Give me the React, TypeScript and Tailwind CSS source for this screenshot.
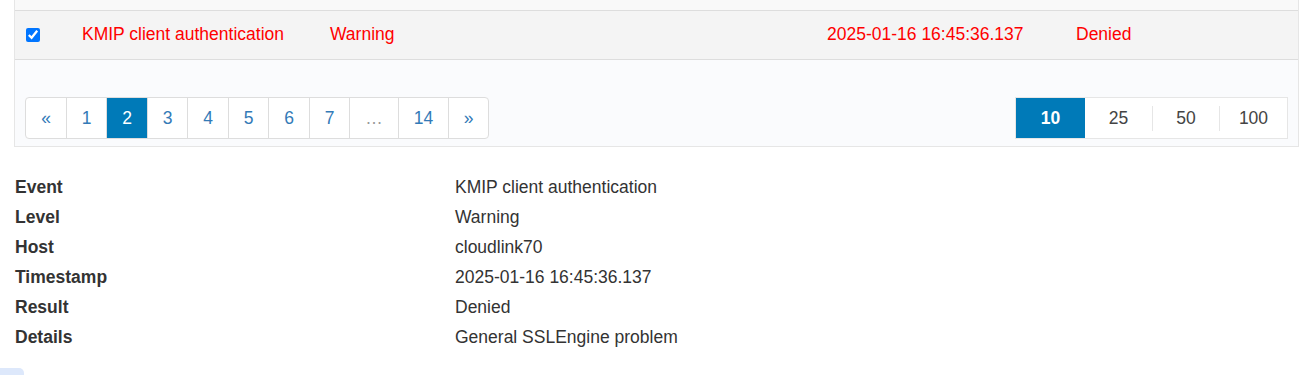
import React from 'react';

const PAGES = [
  { label: '«', w: 'w-[40px]' },
  { label: '1', w: 'w-[40px]' },
  { label: '2', w: 'w-[41px]', active: true },
  { label: '3', w: 'w-[40px]' },
  { label: '4', w: 'w-[41px]' },
  { label: '5', w: 'w-[40px]' },
  { label: '6', w: 'w-[41px]' },
  { label: '7', w: 'w-[40px]' },
  { label: '…', w: 'w-[49px]', muted: true },
  { label: '14', w: 'w-[50px]' },
  { label: '»', w: 'w-[40px]' },
];

const SIZES = ['10', '25', '50', '100'];

const DETAILS: [string, string][] = [
  ['Event', 'KMIP client authentication'],
  ['Level', 'Warning'],
  ['Host', 'cloudlink70'],
  ['Timestamp', '2025-01-16 16:45:36.137'],
  ['Result', 'Denied'],
  ['Details', 'General SSLEngine problem'],
];

export default function App() {
  return (
    <div className="h-[375px] w-[1301px] overflow-hidden bg-white font-['Liberation_Sans',Arial,sans-serif] text-[17.5px] text-[#333]">
      {/* Tabla de eventos (recortada) */}
      <div className="ml-[14px] w-[1285px] border-x border-b border-[#e6e6e6] bg-[#fafbfd]">
        <div className="h-[11px] border-b border-[#dddddd] bg-[#f9f9f9]" />
        <div className="flex h-[49px] items-center border-b border-[#dddddd] bg-[#f4f4f4] pb-[2px] text-[#ff0000]">
          <div className="flex w-[67px] items-center pl-[11px] pt-[2px]">
            <input type="checkbox" checked readOnly className="m-0 h-[14px] w-[14px] accent-[#0075ff]" />
          </div>
          <div className="w-[248px]">KMIP client authentication</div>
          <div className="w-[497px]">Warning</div>
          <div className="w-[249px]">2025-01-16 16:45:36.137</div>
          <div>Denied</div>
        </div>

        {/* Paginación */}
        <div className="flex items-center justify-between pb-[7px] pl-[10px] pr-[10px] pt-[37px]">
          <div className="flex h-[42px] overflow-hidden rounded-[4px] border border-[#dddddd] bg-white">
            {PAGES.map((p, i) => (
              <div
                key={p.label}
                className={
                  'flex items-center justify-center ' +
                  p.w +
                  (i > 0 ? ' border-l border-[#dddddd]' : '') +
                  (p.active ? ' bg-[#007ab8] text-white' : p.muted ? ' text-[#999]' : ' text-[#337ab7]')
                }
              >
                {p.label}
              </div>
            ))}
          </div>
          <div className="flex h-[42px] border border-[#e6e6e6] bg-white">
            {SIZES.map((s, i) => (
              <div key={s} className="flex items-center">
                {i > 1 && <div className="h-[25px] w-px bg-[#e6e6e6]" />}
                <div
                  className={
                    'flex h-full items-center justify-center ' +
                    (i === 0 ? 'w-[69px] bg-[#007ab8] font-bold text-white' : i === 1 ? 'w-[67px] text-[#444]' : i === 2 ? 'w-[66px] text-[#444]' : 'w-[67px] text-[#444]')
                  }
                >
                  {s}
                </div>
              </div>
            ))}
          </div>
        </div>
      </div>

      {/* Detalle del evento */}
      <div className="mt-[25px] pl-[15px]">
        {DETAILS.map(([k, v]) => (
          <div key={k} className="flex h-[30px] items-center">
            <div className="w-[440px] font-bold">{k}</div>
            <div>{v}</div>
          </div>
        ))}
      </div>
      <div className="mt-[16px] h-[10px] w-[24px] rounded-tr-[5px] bg-[#dde8fb]" />
    </div>
  );
}
